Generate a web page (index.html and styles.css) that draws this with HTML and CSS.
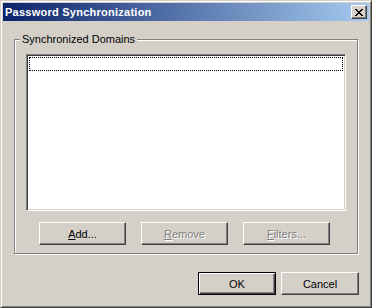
FILE: index.html
```html
<!DOCTYPE html>
<html>
<head>
	<title>Password Synchronization</title>
	<link rel="stylesheet" href="styles.css">
</head>
<body>
	<div class="window">
		<div class="titlebar">
			<span class="title">Password Synchronization</span>
			<button class="close">
				<svg width="8" height="7" viewBox="0 0 8 7" shape-rendering="crispEdges">
					<path fill="#000" d="M0 0h2v1h-2z M6 0h2v1h-2z M1 1h2v1h-2z M5 1h2v1h-2z M2 2h4v1h-4z M3 3h2v1h-2z M2 4h4v1h-4z M1 5h2v1h-2z M5 5h2v1h-2z M0 6h2v1h-2z M6 6h2v1h-2z"/>
				</svg>
			</button>
		</div>

		<div class="dialog-body">
			<div class="groupbox">
				<span class="group-label">Synchronized Domains</span>
				<div class="listbox">
					<div class="list-item focused"></div>
				</div>
				<div class="group-buttons">
					<button class="btn"><u>A</u>dd...</button>
					<button class="btn" disabled><u>R</u>emove</button>
					<button class="btn" disabled><u>F</u>ilters...</button>
				</div>
			</div>

			<div class="dialog-buttons">
				<button class="btn btn-small btn-default">OK</button>
				<button class="btn btn-small">Cancel</button>
			</div>
		</div>
	</div>
</body>
</html>
```

FILE: styles.css
```css
/* Classic Windows 2000 dialog */
* {
	margin: 0;
	padding: 0;
	box-sizing: border-box;
}
body {
	font-family: 'Liberation Sans', Arial, sans-serif;
	font-size: 11px;
	background-color: #d4d0c8;
}
.window {
	width: 372px;
	height: 308px;
	display: flex;
	flex-direction: column;
	background-color: #d4d0c8;
	border: 1px solid;
	border-color: #d4d0c8 #404040 #404040 #d4d0c8;
	box-shadow: inset 1px 1px 0 #fff, inset -1px -1px 0 #808080;
	padding: 2px;
}
.titlebar {
	height: 18px;
	display: flex;
	align-items: center;
	justify-content: space-between;
	background: linear-gradient(to right, #0a246a, #a6caf0);
	padding: 0 2px 0 2px;
}
.title {
	color: #fff;
	font-weight: bold;
	font-size: 11px;
	letter-spacing: 0.25px;
	line-height: 18px;
}
.close {
	width: 16px;
	height: 14px;
	display: flex;
	align-items: flex-start;
	justify-content: flex-start;
	padding: 3px 0 0 3px;
	background-color: #d4d0c8;
	border: 1px solid;
	border-color: #fff #404040 #404040 #fff;
	box-shadow: inset -1px -1px 0 #808080;
}
.close svg {
	display: block;
}
.dialog-body {
	flex: 1;
	padding: 18px 11px 0 11px;
}
.groupbox {
	position: relative;
	border: 1px solid #808080;
	box-shadow: 1px 1px 0 #fff, inset 1px 1px 0 #fff;
	padding: 14px 11px 8px 11px;
}
.group-label {
	position: absolute;
	top: -7px;
	left: 5px;
	padding: 0 2px;
	line-height: 13px;
	background-color: #d4d0c8;
	color: #000;
}
.listbox {
	height: 157px;
	background-color: #fff;
	border: 1px solid;
	border-color: #808080 #fff #fff #808080;
	box-shadow: inset 1px 1px 0 #404040, inset -1px -1px 0 #d4d0c8;
	padding: 2px 2px;
}
.list-item {
	height: 14px;
}
.list-item.focused {
	border: 1px dotted #000;
}
.group-buttons {
	display: flex;
	gap: 15px;
	margin-top: 11px;
	padding-left: 13px;
}
.btn {
	width: 87px;
	height: 23px;
	font-family: 'Liberation Sans', Arial, sans-serif;
	font-size: 11px;
	color: #000;
	background-color: #d4d0c8;
	border: 1px solid;
	border-color: #fff #404040 #404040 #fff;
	box-shadow: inset -1px -1px 0 #808080;
}
.btn:disabled {
	color: #808080;
	text-shadow: 1px 1px 0 #fff;
}
.btn-small {
	width: 78px;
}
.btn-default {
	border-color: #000;
	box-shadow: inset 1px 1px 0 #fff, inset -1px -1px 0 #404040, inset -2px -2px 0 #808080;
}
.dialog-buttons {
	display: flex;
	justify-content: flex-end;
	gap: 5px;
	margin-top: 18px;
	margin-right: -1px;
}
```
